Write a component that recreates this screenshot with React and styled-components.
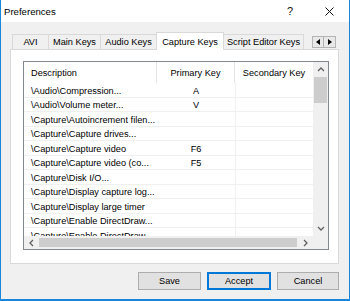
import React from 'react'
import styled, { createGlobalStyle } from 'styled-components'

const rows = [
  ['\\Audio\\Compression...', 'A'],
  ['\\Audio\\Volume meter...', 'V'],
  ['\\Capture\\Autoincrement filen...', ''],
  ['\\Capture\\Capture drives...', ''],
  ['\\Capture\\Capture video', 'F6'],
  ['\\Capture\\Capture video (co...', 'F5'],
  ['\\Capture\\Disk I/O...', ''],
  ['\\Capture\\Display capture log...', ''],
  ['\\Capture\\Display large timer', ''],
  ['\\Capture\\Enable DirectDraw...', ''],
  ['\\Capture\\Enable DirectDraw...', ''],
]

const tabs = [
  { label: 'AVI', width: 37 },
  { label: 'Main Keys', width: 53 },
  { label: 'Audio Keys', width: 57 },
  { label: 'Capture Keys', width: 68, active: true },
  { label: 'Script Editor Keys', width: 81 },
]

const Chevron = ({ dir }) => {
  const pts = {
    up: '1,5 4,2 7,5',
    down: '1,2 4,5 7,2',
    left: '5,1 2,4 5,7',
    right: '2,1 5,4 2,7',
  }
  return (
    <svg width="8" height="8" viewBox="0 0 8 8">
      <polyline points={pts[dir]} fill="none" stroke="#606060" strokeWidth="1.3" />
    </svg>
  )
}

const Triangle = ({ dir }) => (
  <svg width="4" height="6" viewBox="0 0 4 6">
    <polygon points={dir === 'left' ? '4,0 0,3 4,6' : '0,0 4,3 0,6'} fill="#000" />
  </svg>
)

const App = () => (
  <>
    <GlobalStyle />
    <Window>
      <TitleBar>
        <Title>Preferences</Title>
        <Help>?</Help>
        <Close>
          <svg width="9" height="9" viewBox="0 0 9 9">
            <path d="M0.5 0.5 L8.5 8.5 M8.5 0.5 L0.5 8.5" stroke="#111" strokeWidth="1" />
          </svg>
        </Close>
      </TitleBar>
      <Body>
        <TabStrip>
          {tabs.map((t) => (
            <Tab key={t.label} active={t.active} style={{ width: t.width }}>
              {t.label}
            </Tab>
          ))}
          <TabArrows>
            <ArrowBtn><Triangle dir="left" /></ArrowBtn>
            <ArrowBtn><Triangle dir="right" /></ArrowBtn>
          </TabArrows>
        </TabStrip>
        <Panel>
          <ListView>
            <Content>
              <HeaderRow>
                <HeadCell>Description</HeadCell>
                <HeadCell center>Primary Key</HeadCell>
                <HeadCell center last>Secondary Key</HeadCell>
              </HeaderRow>
              {rows.map(([desc, key], i) => (
                <Row key={i}>
                  <Cell>{desc}</Cell>
                  <Cell center>{key}</Cell>
                  <Cell center grid />
                </Row>
              ))}
            </Content>
            <VScroll>
              <ScrollArrow><Chevron dir="up" /></ScrollArrow>
              <VThumb />
              <VTrack />
              <ScrollArrow><Chevron dir="down" /></ScrollArrow>
            </VScroll>
            <HScroll>
              <ScrollArrow><Chevron dir="left" /></ScrollArrow>
              <HThumb />
              <ScrollArrow><Chevron dir="right" /></ScrollArrow>
            </HScroll>
            <Corner />
          </ListView>
        </Panel>
        <Buttons>
          <Button w={63}>Save</Button>
          <Button w={64} primary>Accept</Button>
          <Button w={62}>Cancel</Button>
        </Buttons>
      </Body>
    </Window>
  </>
)

const GlobalStyle = createGlobalStyle`
  body {
    margin: 0;
    background: #fff;
    font-family: "Liberation Sans", Arial, sans-serif;
  }
  * { box-sizing: border-box; }
`

const Window = styled.div`
  width: 350px;
  height: 301px;
  display: flex;
  flex-direction: column;
  background: #f0f0f0;
  border: 1px solid #1a86d9;
  border-top: none;
  border-bottom-width: 2px;
  color: #000;
`

const TitleBar = styled.div`
  height: 22px;
  flex: none;
  display: flex;
  align-items: center;
  background: #fff;
  padding-left: 3px;
`

const Title = styled.div`
  font-size: 9.6px;
  color: #000;
`

const Help = styled.div`
  margin-left: auto;
  font-size: 11px;
  width: 6px;
  margin-right: 32px;
  color: #111;
`

const Close = styled.div`
  display: flex;
  margin-right: 15px;
`

const Body = styled.div`
  flex: 1;
  display: flex;
  flex-direction: column;
  padding: 10px 10px 0 9px;
`

const TabStrip = styled.div`
  height: 17px;
  display: flex;
  align-items: flex-end;
  padding-left: 2px;
  position: relative;
  z-index: 1;
`

const Tab = styled.div`
  height: ${({ active }) => (active ? '18px' : '15px')};
  margin-bottom: ${({ active }) => (active ? '-1px' : '0')};
  margin-left: -1px;
  display: flex;
  align-items: center;
  justify-content: center;
  font-size: 9.2px;
  white-space: nowrap;
  background: ${({ active }) => (active ? '#fff' : '#f0f0f0')};
  border: 1px solid #d9d9d9;
  border-bottom: none;
  position: relative;
  z-index: ${({ active }) => (active ? 2 : 1)};
  &:first-child { margin-left: 0; }
`

const TabArrows = styled.div`
  margin-left: auto;
  margin-right: 3px;
  align-self: flex-start;
  margin-top: 4px;
  display: flex;
`

const ArrowBtn = styled.div`
  width: 12px;
  height: 12px;
  display: flex;
  align-items: center;
  justify-content: center;
  background: #e8e8e8;
  border: 1px solid #b4b4b4;
  & + & { border-left: none; }
`

const Panel = styled.div`
  border: 1px solid #d9d9d9;
  background: #fff;
  padding: 11px 9px 13px 12px;
`

const ListView = styled.div`
  width: 306px;
  height: 189px;
  border: 1px solid #828790;
  background: #fff;
  display: grid;
  grid-template-columns: 1fr 15px;
  grid-template-rows: 1fr 13px;
`

const Content = styled.div`
  overflow: hidden;
  font-size: 9.2px;
`

const HeaderRow = styled.div`
  display: grid;
  grid-template-columns: 133px 78px 78px;
  height: 21px;
`

const HeadCell = styled.div`
  display: flex;
  align-items: center;
  justify-content: ${({ center }) => (center ? 'center' : 'flex-start')};
  padding-left: ${({ center }) => (center ? '0' : '7px')};
  border-right: ${({ last }) => (last ? 'none' : '1px solid #e5e5e5')};
  white-space: nowrap;
`

const Row = styled.div`
  display: grid;
  grid-template-columns: 133px 78px 78px;
  height: 14.5px;
  border-bottom: 1px solid #f0f0f0;
`

const Cell = styled.div`
  display: flex;
  align-items: flex-end;
  justify-content: ${({ center }) => (center ? 'center' : 'flex-start')};
  padding-left: ${({ center }) => (center ? '0' : '7px')};
  line-height: 11px;
  white-space: nowrap;
  overflow: hidden;
  border-left: ${({ grid }) => (grid ? '1px solid #f0f0f0' : 'none')};
`

const VScroll = styled.div`
  background: #f0f0f0;
  display: flex;
  flex-direction: column;
`

const ScrollArrow = styled.div`
  flex: none;
  width: 15px;
  height: 15px;
  display: flex;
  align-items: center;
  justify-content: center;
`

const VThumb = styled.div`
  height: 26px;
  margin: 0 1px;
  background: #cdcdcd;
`

const VTrack = styled.div`
  flex: 1;
`

const HScroll = styled.div`
  background: #f0f0f0;
  display: flex;
  align-items: center;
  & > ${ScrollArrow} { height: 13px; }
`

const HThumb = styled.div`
  flex: 1;
  height: 9px;
  margin-right: 1px;
  background: #cdcdcd;
`

const Corner = styled.div`
  background: #f0f0f0;
`

const Buttons = styled.div`
  display: flex;
  justify-content: flex-end;
  gap: 6px;
  margin-top: 8px;
`

const Button = styled.div`
  width: ${({ w }) => w}px;
  height: 18px;
  display: flex;
  align-items: center;
  justify-content: center;
  font-size: 9.2px;
  background: #e1e1e1;
  border: 1px solid ${({ primary }) => (primary ? '#0078d7' : '#adadad')};
  box-shadow: ${({ primary }) => (primary ? 'inset 0 0 0 1px #0078d7' : 'none')};
`

export default App
